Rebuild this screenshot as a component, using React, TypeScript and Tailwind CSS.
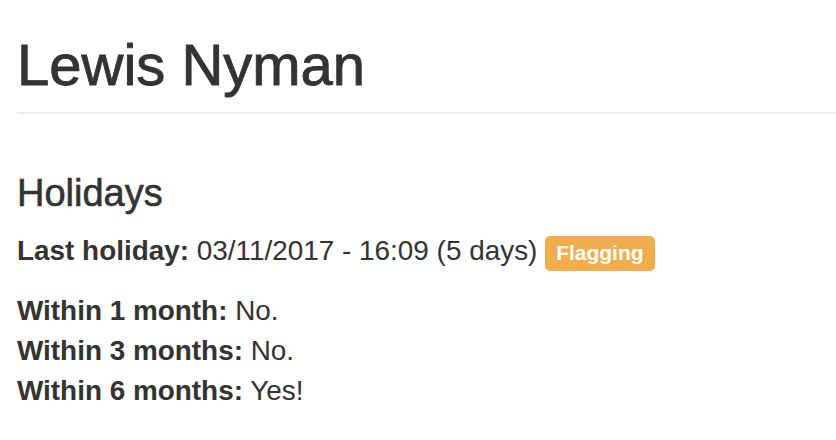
import React from "react";

export default function App() {
  return (
    <div
      className="min-h-[440px] w-full bg-white pl-[17px] pt-[33px] text-[#333333]"
      style={{ fontFamily: '"Liberation Sans", Arial, Helvetica, sans-serif' }}
    >
      <h1 className="text-[58px] leading-[63px] font-normal [-webkit-text-stroke:0.9px_#333333]">
        Lewis Nyman
      </h1>
      <div className="mt-[16px] h-[2px] bg-[#eeeeee]" />
      <h3 className="mt-[59px] text-[38px] leading-[41px] font-normal [-webkit-text-stroke:0.6px_#333333]">
        Holidays
      </h3>
      <p className="mt-[17px] text-[27.9px] leading-[40px]">
        <strong className="font-bold">Last holiday:</strong> 03/11/2017 - 16:09 (5 days){" "}
        <span className="rounded-[5px] bg-[#f0ad4e] px-[11px] pt-[5px] pb-[7px] text-[21px] leading-none font-bold text-white">
          Flagging
        </span>
      </p>
      <p className="mt-[20px] text-[27.9px] leading-[40px]">
        <strong className="font-bold">Within 1 month:</strong> No.
        <br />
        <strong className="font-bold">Within 3 months:</strong> No.
        <br />
        <strong className="font-bold">Within 6 months:</strong> Yes!
      </p>
    </div>
  );
}
